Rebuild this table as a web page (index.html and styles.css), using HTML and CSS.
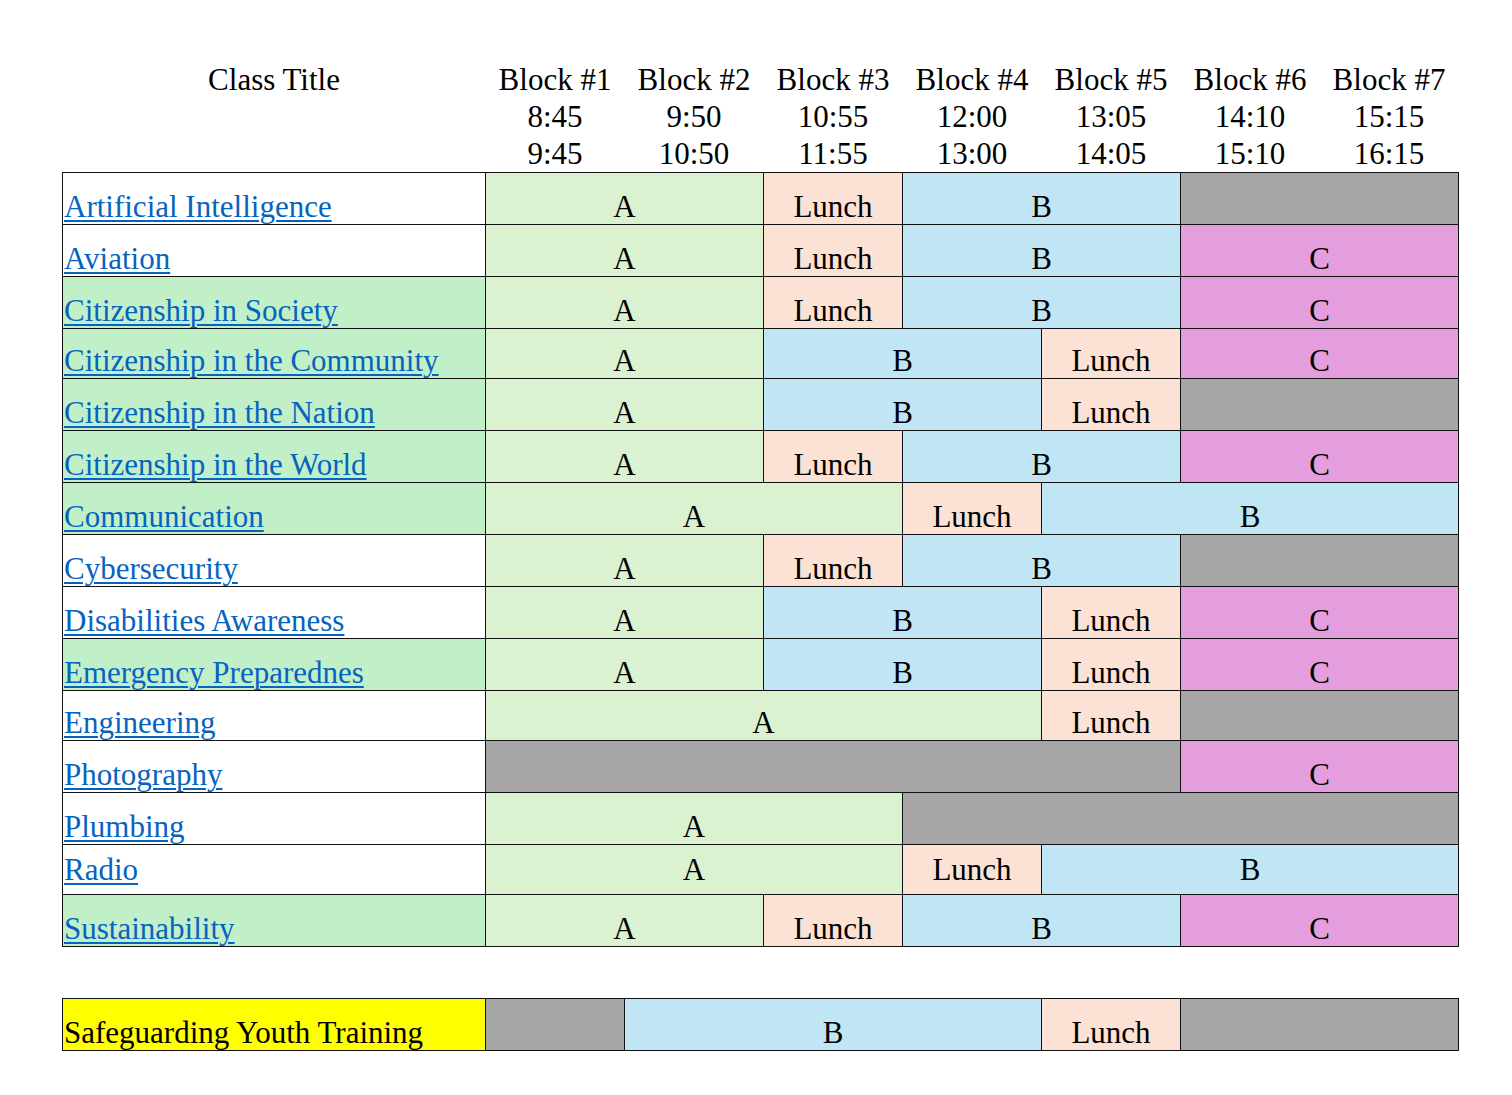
FILE: index.html
```html
<!DOCTYPE html>
<html lang="en">
<head>
<meta charset="utf-8">
<title>Class Schedule</title>
<link rel="stylesheet" href="styles.css">
</head>
<body>
<table class="schedule">
  <colgroup>
    <col class="c-title">
    <col class="c-block" span="7">
  </colgroup>
  <thead>
    <tr class="head">
      <th class="title-h">Class Title</th>
      <th>Block #1<br>8:45<br>9:45</th>
      <th>Block #2<br>9:50<br>10:50</th>
      <th>Block #3<br>10:55<br>11:55</th>
      <th>Block #4<br>12:00<br>13:00</th>
      <th>Block #5<br>13:05<br>14:05</th>
      <th>Block #6<br>14:10<br>15:10</th>
      <th>Block #7<br>15:15<br>16:15</th>
    </tr>
  </thead>
  <tbody>
    <tr>
      <td class="name"><a href="#">Artificial Intelligence</a></td>
      <td class="a" colspan="2">A</td><td class="l">Lunch</td><td class="b" colspan="2">B</td><td class="x" colspan="2"></td>
    </tr>
    <tr>
      <td class="name"><a href="#">Aviation</a></td>
      <td class="a" colspan="2">A</td><td class="l">Lunch</td><td class="b" colspan="2">B</td><td class="c" colspan="2">C</td>
    </tr>
    <tr>
      <td class="name g"><a href="#">Citizenship in Society</a></td>
      <td class="a" colspan="2">A</td><td class="l">Lunch</td><td class="b" colspan="2">B</td><td class="c" colspan="2">C</td>
    </tr>
    <tr class="short">
      <td class="name g"><a href="#">Citizenship in the Community</a></td>
      <td class="a" colspan="2">A</td><td class="b" colspan="2">B</td><td class="l">Lunch</td><td class="c" colspan="2">C</td>
    </tr>
    <tr>
      <td class="name g"><a href="#">Citizenship in the Nation</a></td>
      <td class="a" colspan="2">A</td><td class="b" colspan="2">B</td><td class="l">Lunch</td><td class="x" colspan="2"></td>
    </tr>
    <tr>
      <td class="name g"><a href="#">Citizenship in the World</a></td>
      <td class="a" colspan="2">A</td><td class="l">Lunch</td><td class="b" colspan="2">B</td><td class="c" colspan="2">C</td>
    </tr>
    <tr>
      <td class="name g"><a href="#">Communication</a></td>
      <td class="a" colspan="3">A</td><td class="l">Lunch</td><td class="b" colspan="3">B</td>
    </tr>
    <tr>
      <td class="name"><a href="#">Cybersecurity</a></td>
      <td class="a" colspan="2">A</td><td class="l">Lunch</td><td class="b" colspan="2">B</td><td class="x" colspan="2"></td>
    </tr>
    <tr>
      <td class="name"><a href="#">Disabilities Awareness</a></td>
      <td class="a" colspan="2">A</td><td class="b" colspan="2">B</td><td class="l">Lunch</td><td class="c" colspan="2">C</td>
    </tr>
    <tr>
      <td class="name g"><a href="#">Emergency Preparednes</a></td>
      <td class="a" colspan="2">A</td><td class="b" colspan="2">B</td><td class="l">Lunch</td><td class="c" colspan="2">C</td>
    </tr>
    <tr class="short">
      <td class="name"><a href="#">Engineering</a></td>
      <td class="a" colspan="4">A</td><td class="l">Lunch</td><td class="x" colspan="2"></td>
    </tr>
    <tr>
      <td class="name"><a href="#">Photography</a></td>
      <td class="x" colspan="5"></td><td class="c" colspan="2">C</td>
    </tr>
    <tr>
      <td class="name"><a href="#">Plumbing</a></td>
      <td class="a" colspan="3">A</td><td class="x" colspan="4"></td>
    </tr>
    <tr class="short mid">
      <td class="name"><a href="#">Radio</a></td>
      <td class="a" colspan="3">A</td><td class="l">Lunch</td><td class="b" colspan="3">B</td>
    </tr>
    <tr>
      <td class="name g"><a href="#">Sustainability</a></td>
      <td class="a" colspan="2">A</td><td class="l">Lunch</td><td class="b" colspan="2">B</td><td class="c" colspan="2">C</td>
    </tr>
    <tr class="gap">
      <td colspan="8"></td>
    </tr>
    <tr>
      <td class="name y">Safeguarding Youth Training</td>
      <td class="x"></td><td class="b" colspan="3">B</td><td class="l">Lunch</td><td class="x" colspan="2"></td>
    </tr>
  </tbody>
</table>
</body>
</html>
```

FILE: styles.css
```css
html, body {
  margin: 0;
  padding: 0;
  background: #ffffff;
}

body,
.schedule,
.schedule th,
.schedule td {
  font-family: "Liberation Serif", "Times New Roman", Times, "DejaVu Serif", serif;
  font-size: 31px;
  color: #000000;
}

.schedule {
  border-collapse: collapse;
  table-layout: fixed;
  width: 1395px;
  margin: 61px 0 0 62px;
}

.c-title {
  width: 423px;
}

.c-block {
  width: 139px;
}

.head th {
  font-weight: normal;
  line-height: 37px;
  padding: 0;
  text-align: center;
  vertical-align: bottom;
  border: none;
}

.head .title-h {
  vertical-align: top;
}

tbody td {
  height: 51px;
  padding: 0;
  border: 1px solid #111111;
  line-height: 35px;
  text-align: center;
  vertical-align: bottom;
  white-space: nowrap;
  overflow: hidden;
}

tbody tr.short td {
  height: 49px;
}

tbody tr.mid td {
  vertical-align: middle;
}

tbody td.name {
  text-align: left;
  padding-left: 1px;
  background: #ffffff;
}

td.name a {
  color: #0563c1;
  text-decoration: underline;
  text-decoration-thickness: 2px;
  text-underline-offset: 3px;
}

td.name.g {
  background: #c1f0c8;
}

td.name.y {
  background: #ffff00;
}

td.a {
  background: #daf2d0;
}

td.l {
  background: #fbe2d5;
}

td.b {
  background: #c0e6f5;
}

td.c {
  background: #e49edd;
}

td.x {
  background: #a6a6a6;
}

tbody tr.gap td {
  border-left: none;
  border-right: none;
  background: transparent;
}
```
